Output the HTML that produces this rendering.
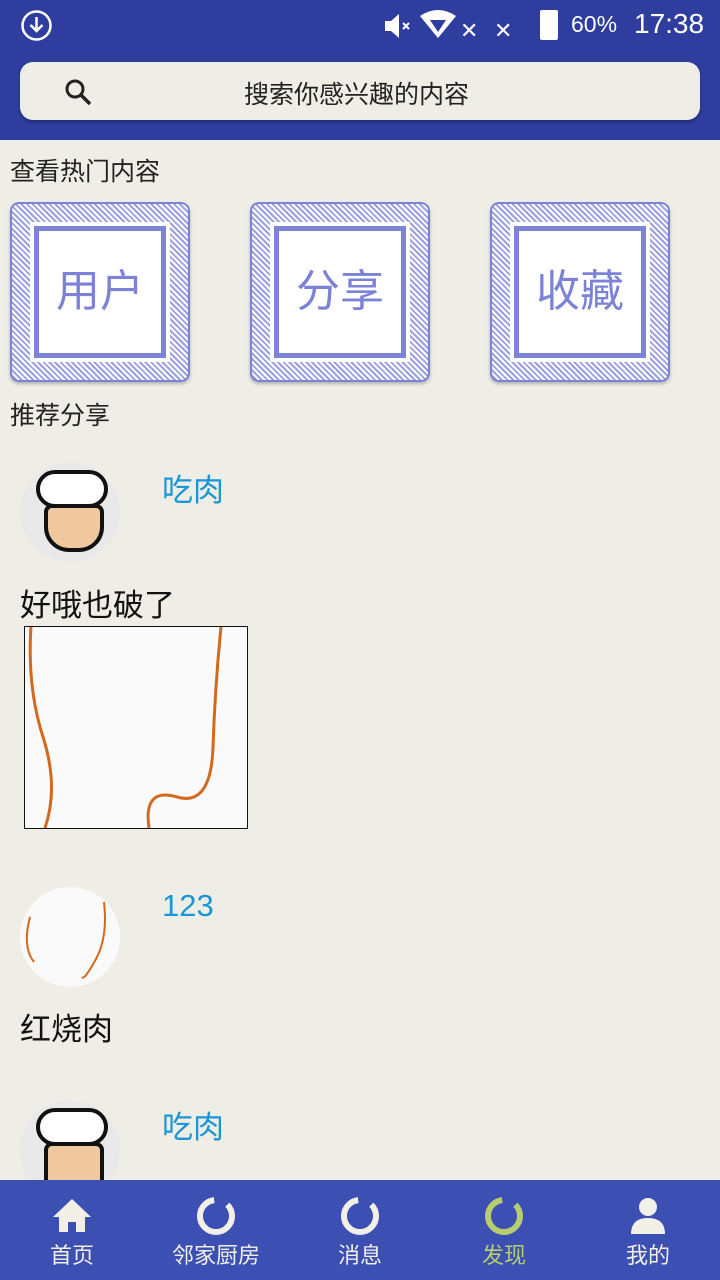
<!DOCTYPE html><html><head><meta charset="utf-8"><style>
*{margin:0;padding:0;box-sizing:border-box}
body{width:720px;height:1280px;overflow:hidden;background:#efeee6;font-family:"Liberation Sans","Noto Sans CJK SC",sans-serif;position:relative}
.hdr{position:absolute;left:0;top:0;width:720px;height:140px;background:#2f3d9f}
.sb{position:absolute;color:#fff;font-size:26px;top:10px}
.search{position:absolute;left:20px;top:62px;width:680px;height:58px;background:#efeee6;border-radius:13px;box-shadow:0 2px 3px rgba(0,0,0,.3)}
.search span{position:absolute;left:224px;top:13px;font-size:25px;color:#222}
.t{position:absolute;font-size:25px;color:#222}
.tile{position:absolute;top:202px;width:180px;height:180px;border:2px solid #7c83d6;border-radius:9px;background:repeating-linear-gradient(45deg,#fff 0 2px,#9aa0e0 2px 4px);box-shadow:0 2px 3px rgba(0,0,0,.25)}
.tile .in{position:absolute;left:22px;top:22px;width:132px;height:132px;background:#fff;border:5px solid #7c83d6;outline:4px solid #fff;color:#7c83d6;font-size:44px;text-align:center;line-height:122px;font-family:"WenQuanYi Zen Hei",sans-serif}
.name{position:absolute;left:162px;font-size:31px;color:#1a96d8}
.txt{position:absolute;left:20px;font-size:31px;color:#111}
.av{position:absolute;left:20px;width:100px;height:100px;border-radius:50%;background:#e9e9e9}
.nav{position:absolute;left:0;top:1180px;width:720px;height:100px;background:#3c50b4}
.ni{position:absolute;top:0;width:144px;text-align:center;color:#f2f0e6;font-size:22px}
.ni svg{display:block;margin:16px auto 2px}
</style></head><body>
<div class="hdr">
<svg style="position:absolute;left:20px;top:9px" width="33" height="33" viewBox="0 0 33 33"><circle cx="16.5" cy="16.5" r="14" fill="none" stroke="#fff" stroke-width="2.5"/><path d="M16.5 8v14M10.5 16l6 6 6-6" fill="none" stroke="#fff" stroke-width="2.5"/></svg>
<svg style="position:absolute;left:383px;top:12px" width="30" height="28" viewBox="0 0 30 28"><path d="M2 9h6l8-7v24l-8-7H2z" fill="#fff"/><path d="M20 11l6 6M26 11l-6 6" stroke="#fff" stroke-width="2"/></svg>
<svg style="position:absolute;left:420px;top:10px" width="36" height="30" viewBox="0 0 36 30"><path d="M0 6Q18-6 36 6L18 28z" fill="#fff"/><path d="M10 10h16L18 22z" fill="#2f3d9f"/></svg>
<div class="sb" style="left:460px;top:18px;font-size:22px">✕</div><div class="sb" style="left:494px;top:18px;font-size:22px">✕</div>
<div style="position:absolute;left:540px;top:10px;width:18px;height:30px;background:#fff;border-radius:2px"></div>
<div class="sb" style="left:571px;top:11px;font-size:23px">60%</div>
<div class="sb" style="left:634px;top:8px;font-size:28px">17:38</div>
<div class="search"><svg style="position:absolute;left:44px;top:16px" width="28" height="28" viewBox="0 0 28 28"><circle cx="11" cy="11" r="8" fill="none" stroke="#222" stroke-width="3"/><path d="M17 17l9 9" stroke="#222" stroke-width="3.5"/></svg><span>搜索你感兴趣的内容</span></div>
</div>
<div class="t" style="left:10px;top:152px">查看热门内容</div>
<div class="tile" style="left:10px"><div class="in">用户</div></div>
<div class="tile" style="left:250px"><div class="in">分享</div></div>
<div class="tile" style="left:490px"><div class="in">收藏</div></div>
<div class="t" style="left:10px;top:396px">推荐分享</div>
<div class="av" style="top:462px"></div>
<div style="position:absolute;left:28px;top:470px;width:86px;height:85px">
<div style="position:absolute;left:8px;top:0;width:72px;height:38px;background:#fff;border:4px solid #111;border-radius:20px"></div>
<div style="position:absolute;left:16px;top:34px;width:60px;height:48px;background:#f0c8a0;border:4px solid #111;border-radius:8px 8px 25px 25px"></div></div>
<div class="name" style="top:465px">吃肉</div>
<div class="txt" style="top:580px">好哦也破了</div>
<div style="position:absolute;left:24px;top:626px;width:224px;height:203px;background:#fafafa;border:1px solid #111">
<svg width="222" height="201"><path d="M6 0Q2 60 18 110T20 201" fill="none" stroke="#d2691e" stroke-width="3"/><path d="M196 0Q190 60 188 120T152 170 124 201" fill="none" stroke="#d2691e" stroke-width="3"/></svg></div>
<div class="av" style="top:887px;background:#fafafa"><svg width="100" height="100"><path d="M10 30Q2 60 14 75" fill="none" stroke="#d2691e" stroke-width="2"/><path d="M84 15Q88 50 76 72T62 90" fill="none" stroke="#d2691e" stroke-width="2"/></svg></div>
<div class="name" style="top:888px">123</div>
<div class="txt" style="top:1004px">红烧肉</div>
<div class="av" style="top:1100px"></div>
<div style="position:absolute;left:28px;top:1108px;width:86px;height:72px;overflow:hidden">
<div style="position:absolute;left:8px;top:0;width:72px;height:38px;background:#fff;border:4px solid #111;border-radius:20px"></div>
<div style="position:absolute;left:16px;top:34px;width:60px;height:48px;background:#f0c8a0;border:4px solid #111;border-radius:8px"></div></div>
<div class="name" style="top:1102px">吃肉</div>
<div class="nav">
<div class="ni" style="left:0"><svg width="40" height="40" viewBox="0 0 40 40"><path d="M20 3L1 21h6v15h9V26h8v10h9V21h6z" fill="#f2f0e6"/></svg>首页</div>
<div class="ni" style="left:144px"><svg width="40" height="40" viewBox="0 0 40 40"><circle cx="20" cy="20" r="16" fill="none" stroke="#f2f0e6" stroke-width="6" stroke-dasharray="86 15" transform="rotate(-45 20 20)"/></svg>邻家厨房</div>
<div class="ni" style="left:288px"><svg width="40" height="40" viewBox="0 0 40 40"><circle cx="20" cy="20" r="16" fill="none" stroke="#f2f0e6" stroke-width="6" stroke-dasharray="86 15" transform="rotate(-45 20 20)"/></svg>消息</div>
<div class="ni" style="left:432px;color:#b8cc70"><svg width="40" height="40" viewBox="0 0 40 40"><circle cx="20" cy="20" r="16" fill="none" stroke="#b8cc70" stroke-width="6" stroke-dasharray="86 15" transform="rotate(-45 20 20)"/></svg>发现</div>
<div class="ni" style="left:576px"><svg width="40" height="40" viewBox="0 0 40 40"><circle cx="20" cy="11" r="9" fill="#f2f0e6"/><path d="M3 38Q3 22 20 22T37 38z" fill="#f2f0e6"/></svg>我的</div>
</div>
</body></html>
